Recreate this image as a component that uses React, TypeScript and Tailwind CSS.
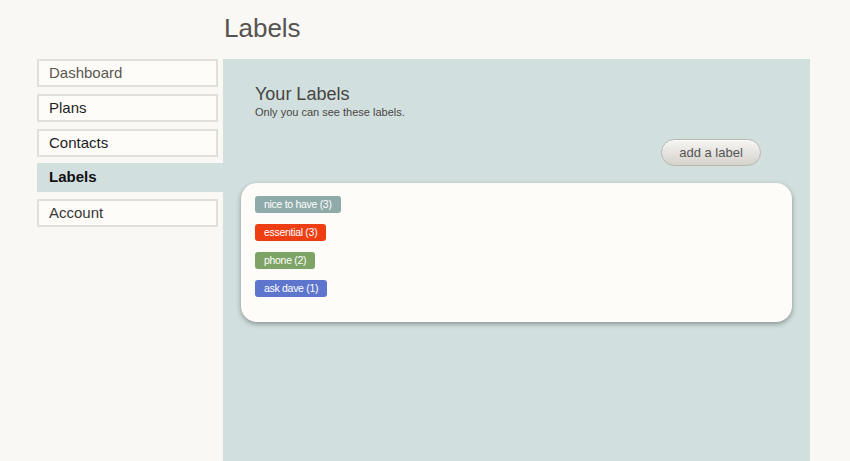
import React from "react";

const navItems = [
  { name: "Dashboard", tone: "text-[#5b5650]" },
  { name: "Plans", tone: "text-[#1e1e1e]" },
  { name: "Contacts", tone: "text-[#1e1e1e]" },
  { name: "Labels", active: true },
  { name: "Account", tone: "text-[#3a3835]" },
];

const labels = [
  { name: "nice to have", count: 3, color: "bg-[#8eaaa9]" },
  { name: "essential", count: 3, color: "bg-[#ee3e12]" },
  { name: "phone", count: 2, color: "bg-[#7ea366]" },
  { name: "ask dave", count: 1, color: "bg-[#5d75cc]" },
];

export default function App() {
  return (
    <div className="min-h-[461px] bg-[#f9f8f5] font-['Liberation_Sans',Arial,sans-serif] overflow-hidden">
      <div className="pl-[37px]">
        {/* Header */}
        <div className="h-[59px] pl-[187px] pt-[12px]">
          <h1 className="text-[26px] leading-[32px] text-[#555350]">Labels</h1>
        </div>

        <div className="flex">
          {/* Sidebar */}
          <nav className="w-[186px] flex flex-col">
            {navItems.map((item) =>
              item.active ? (
                <div
                  key={item.name}
                  className="h-[29px] mb-[7px] -mt-[1px] bg-[#d1dfdf] pl-[12px] flex items-center text-[15px] font-bold text-[#111]"
                >
                  {item.name}
                </div>
              ) : (
                <div
                  key={item.name}
                  className={`h-[28px] mb-[7px] mr-[5px] border-2 border-[#e2dfda] bg-[#fdfcf9] pl-[10px] flex items-center text-[15px] ${item.tone}`}
                >
                  {item.name}
                </div>
              )
            )}
          </nav>

          {/* Main panel */}
          <main className="w-[587px] min-h-[402px] bg-[#d1dfdf] px-[18px] pt-[24px]">
            <div className="pl-[14px]">
              <h2 className="text-[18px] leading-[22px] text-[#47443f]">Your Labels</h2>
              <p className="text-[11px] leading-[14px] text-[#4a4742]">
                Only you can see these labels.
              </p>
            </div>

            <div className="flex justify-end pr-[31px] mt-[20px]">
              <button className="w-[100px] h-[27px] rounded-full border border-[#b9b6b0] bg-gradient-to-b from-[#f6f5f2] to-[#d6d3cd] text-[13px] text-[#555] shadow-[inset_0_1px_0_rgba(255,255,255,0.8)]">
                add a label
              </button>
            </div>

            <div className="mt-[17px] bg-[#fdfcf9] rounded-[16px] shadow-[0_2px_5px_rgba(0,0,0,0.35)] pl-[14px] pt-[13px] pb-[25px] flex flex-col items-start gap-[11px]">
              {labels.map((l) => (
                <span
                  key={l.name}
                  className={`h-[17px] px-[9px] rounded-[3px] flex items-center text-[10.5px] tracking-[-0.3px] text-white ${l.color}`}
                >
                  {l.name} ({l.count})
                </span>
              ))}
            </div>
          </main>
        </div>
      </div>
    </div>
  );
}
